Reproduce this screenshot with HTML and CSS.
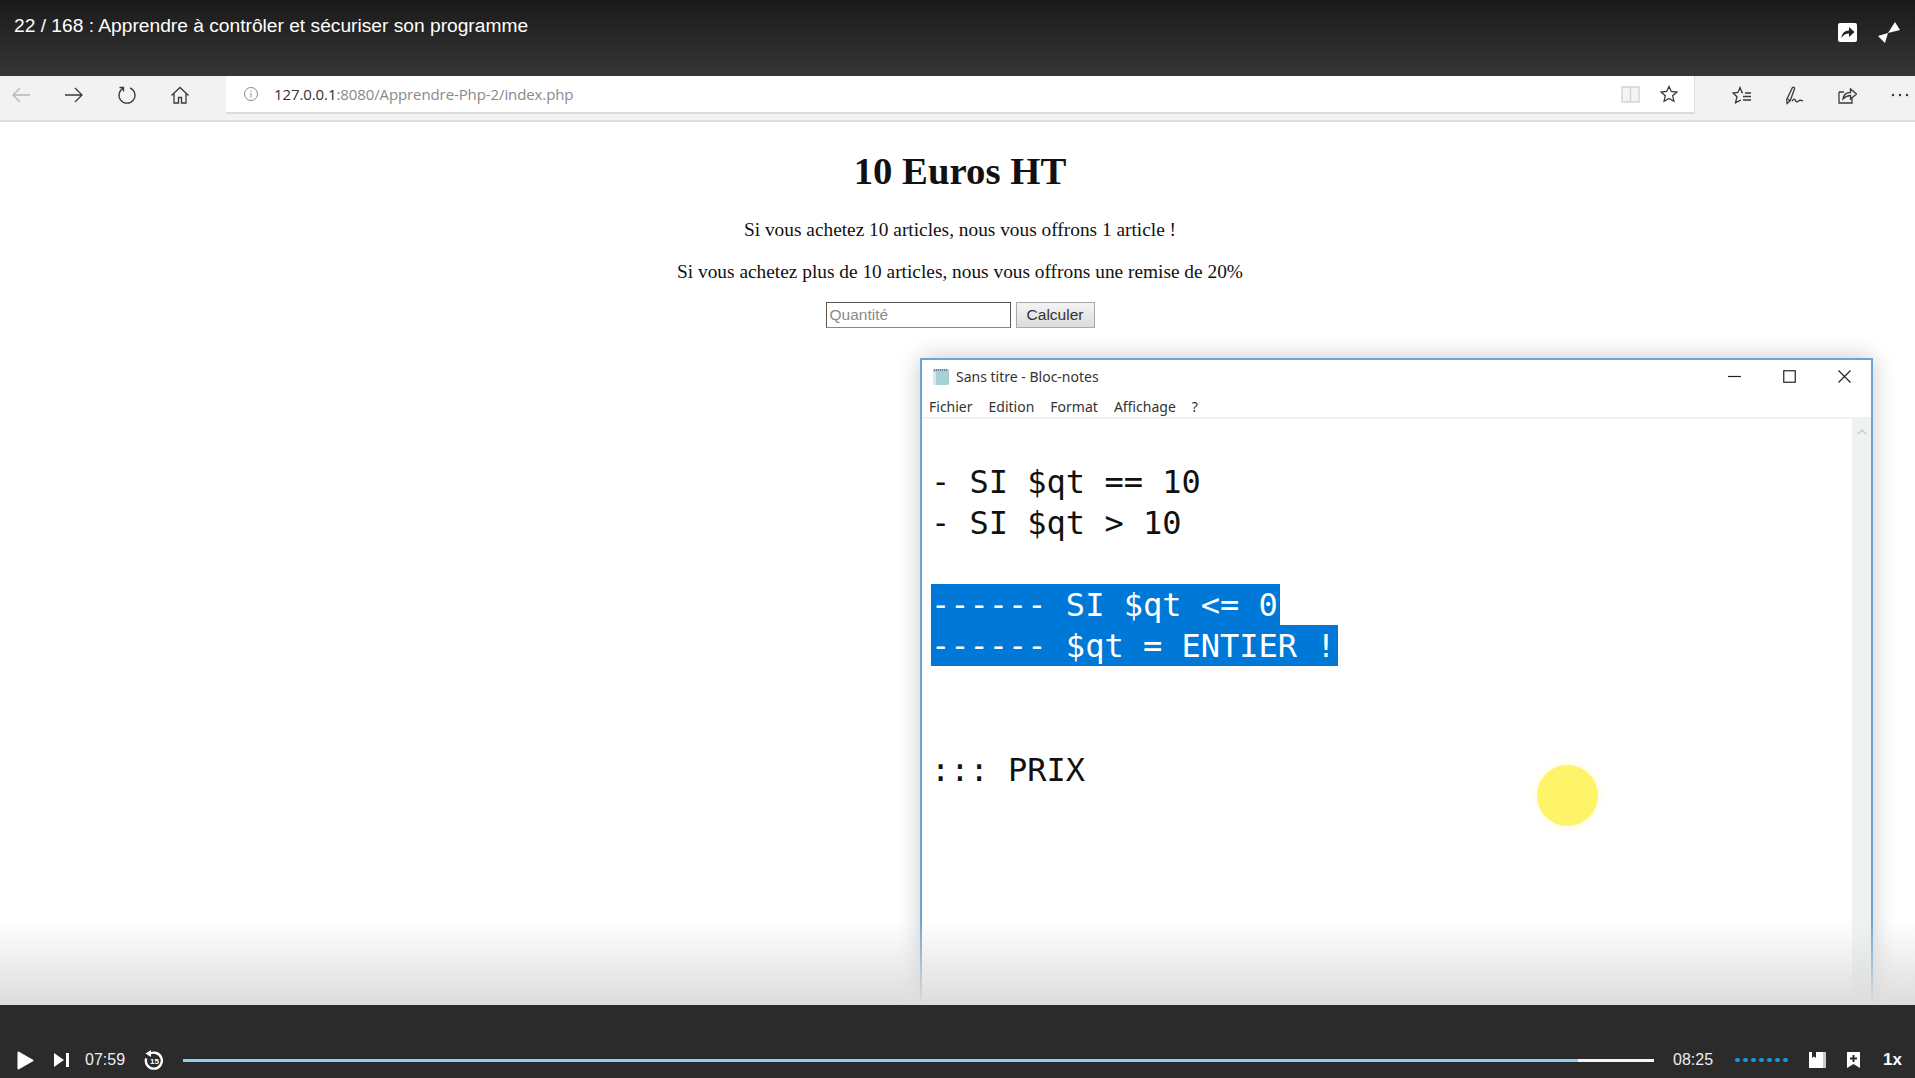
FILE: index.html
```html
<!DOCTYPE html>
<html lang="fr">
<head>
    <meta charset="UTF-8">
    <title>22 / 168 : Apprendre à contrôler et sécuriser son programme</title>
    <link rel="stylesheet" href="styles.css">
</head>
<body>
    <header class="player-top">
        <div class="video-title">22 / 168 : Apprendre à contrôler et sécuriser son programme</div>
        <div class="top-actions">
            <svg class="icon-share-box" viewBox="0 0 19 19"><rect width="19" height="19" rx="2" fill="#fff"/><path d="M3.500 15c.4-4.600 3-7.400 7.500-7.400V4l5.500 5-5.500 5v-3.400c-3.200 0-5.600 1.300-7.500 4.400z" fill="#222"/></svg>
            <svg class="icon-pin" viewBox="0 0 22 22"><path d="M10 11L17 0l5 8zM0 14l10-3-3 10z" fill="#fff"/></svg>
        </div>
    </header>

    <nav class="browser-bar">
        <div class="nav-buttons">
            <svg class="tool-icon" viewBox="0 0 20 20"><path d="M19 10H2M9 3l-7 7 7 7" class="stroke-light"/></svg>
            <svg class="tool-icon" viewBox="0 0 20 20"><path d="M1 10h17M11 3l7 7-7 7" class="stroke"/></svg>
            <svg class="tool-icon" viewBox="0 0 20 20"><path d="M7 2.800a8 8 0 1 0 6 0M6.500 6.500V2.500H2.500" class="stroke"/></svg>
            <svg class="tool-icon" viewBox="0 0 20 20"><path d="M1.500 10.500L10 2.500l8.500 8M4 8.500V18h4.500v-5.500h3V18H16V8.500" class="stroke"/></svg>
        </div>
        <div class="address-bar">
            <svg class="info-icon" viewBox="0 0 16 16"><circle cx="8" cy="8" r="6.500" fill="none" stroke="#888"/><path d="M8 7v4.500M8 4.500v1.300" stroke="#888" fill="none"/></svg>
            <div class="url"><span class="url-host">127.0.0.1</span>:8080/Apprendre-Php-2/index.php</div>
            <svg class="reader-icon" viewBox="0 0 19 18"><path d="M1 2h7.500l1 1 1-1H18v15h-7.500l-1-1-1 1H1zM9.500 3v13" fill="#f4f4f4" stroke="#d2d2d2" stroke-width="1.400"/></svg>
            <svg class="star-icon" viewBox="0 0 18 18"><path d="M9 1.500l2.300 5 5.500.6-4.100 3.700 1.200 5.400L9 13.400 4.100 16.200l1.200-5.400L1.200 7.100l5.500-.6z" class="stroke"/></svg>
        </div>
        <div class="browser-tools">
            <svg class="tool-icon-sm" viewBox="0 0 19 19"><path d="M11 6.500h-1L8 1.500 6 6.500 1 7l4 3.700-1.500 6L9 14M13 7h6M11 10.500h8M11 14h8" class="stroke"/></svg>
            <svg class="tool-icon-sm" viewBox="0 0 19 19"><path d="M7.500 1.500c1.500-.8 2.500.2 2 1.500L5 15l-3 2.500-.3-4zM3 13l2 2M7 15c2-3 3-2 3.500-.5s1.500 2 3 .5 2-1 4.500 0" class="stroke"/></svg>
            <svg class="tool-icon-sm" viewBox="0 0 19 19"><path d="M1 6h5M1 6v11h13v-6M5 13c.5-4 3-6.500 7.500-6.500V3l6 5-6 5V9.500C9 9.500 7 11 5 13z" class="stroke"/></svg>
            <svg class="tool-icon-sm more-icon" viewBox="0 0 18 4"><circle cx="2" cy="2" r="1.200"/><circle cx="9" cy="2" r="1.200"/><circle cx="16" cy="2" r="1.200"/></svg>
        </div>
    </nav>

    <main class="page">
        <section class="php-page">
            <h1>10 Euros HT</h1>
            <p>Si vous achetez 10 articles, nous vous offrons 1 article !</p>
            <p>Si vous achetez plus de 10 articles, nous vous offrons une remise de 20%</p>
            <form class="qty-form">
                <input type="text" placeholder="Quantité">
                <button type="button">Calculer</button>
            </form>
        </section>

        <div class="notepad">
            <div class="np-title">
                <svg class="np-icon" viewBox="0 0 18 18"><path d="M2 2h14l1 1v14l-1 1H3l-2-1V3z" fill="#a9cfd8"/><path d="M2 3h14" stroke="#5d7f8c" stroke-width="2" stroke-dasharray="1 1"/><path d="M1 5h3v13H3l-2-1z" fill="#d9e8ea"/></svg>
                <span class="np-name">Sans titre - Bloc-notes</span>
                <div class="np-controls">
                    <svg viewBox="0 0 13 13"><path d="M0 6.500h13" class="stroke-win"/></svg>
                    <svg viewBox="0 0 13 13"><rect x=".75" y=".75" width="11.500" height="11.500" class="stroke-win"/></svg>
                    <svg viewBox="0 0 13 13"><path d="M.5.500l12 12M12.500.500l-12 12" class="stroke-win"/></svg>
                </div>
            </div>
            <div class="np-menu">
                <span>Fichier</span><span>Edition</span><span>Format</span><span>Affichage</span><span>?</span>
            </div>
            <div class="np-body">
                <div class="np-text">
                    <div class="line-first">&nbsp;</div>
                    <div>- SI $qt == 10</div>
                    <div>- SI $qt &gt; 10</div>
                    <div class="line-gap">&nbsp;</div>
                    <div class="selected">------ SI $qt &lt;= 0</div>
                    <div class="selected">------ $qt = ENTIER !</div>
                    <div>&nbsp;</div>
                    <div>&nbsp;</div>
                    <div class="line-last">::: PRIX</div>
                </div>
                <div class="np-scroll">
                    <svg viewBox="0 0 10 6"><path d="M1 5l4-4 4 4" fill="none" stroke="#c4c9c9" stroke-width="1.500"/></svg>
                </div>
            </div>
        </div>

        <div class="cursor-dot"></div>
        <div class="bottom-fade"></div>
    </main>

    <footer class="player-bottom">
        <svg class="ctl-play" viewBox="0 0 17 19"><path d="M1.500 1.500L15.500 9.500 1.500 17.500z" fill="#fff" stroke="#fff" stroke-width="2" stroke-linejoin="round"/></svg>
        <svg class="ctl-next" viewBox="0 0 15 14"><path d="M0 0l10 7-10 7zM12 0h3v14h-3z" fill="#fff"/></svg>
        <span class="time time-now">07:59</span>
        <svg class="ctl-replay" viewBox="0 0 20 20">
            <path d="M5 4.300a8 8 0 1 1-2.800 4" fill="none" stroke="#fff" stroke-width="2.400"/>
            <path d="M7 0v7L1.500 3.500z" fill="#fff"/>
            <text x="10.500" y="13.500" class="replay-num">15</text>
        </svg>
        <div class="track"><div class="track-played" style="width: 94.8%"></div></div>
        <span class="time time-total">08:25</span>
        <div class="speed-dots"><i></i><i></i><i></i><i></i><i></i><i></i><i></i></div>
        <svg class="ctl-book" viewBox="0 0 17 16"><path d="M0 0h14v16H0z" fill="#fff"/><path d="M14 0h3v16h-3z" fill="#c9c9c9"/><path d="M3 0h4v6L5 4.500 3 6z" fill="#2b2b2b"/></svg>
        <svg class="ctl-mark" viewBox="0 0 13 16"><path d="M0 0h13v16L6.500 12 0 16z" fill="#fff"/><path d="M6.500 3v7M3 6.500h7" stroke="#2b2b2b" stroke-width="2"/></svg>
        <span class="rate">1x</span>
    </footer>
</body>
</html>
```

FILE: styles.css
```css
* {
    box-sizing: border-box;
}
html, body {
    margin: 0;
    height: 100%;
}
body {
    display: flex;
    flex-direction: column;
    height: 1078px;
    overflow: hidden;
    background: #fff;
    font-family: "Liberation Sans", Arial, sans-serif;
}

/* player header */
.player-top {
    height: 76px;
    flex: none;
    display: flex;
    justify-content: space-between;
    padding: 15px 15px 0 14px;
    background: linear-gradient(to bottom, #1a1a1a, #363636);
    color: #fff;
}
.video-title {
    font-size: 19.200px;
    line-height: 22px;
}
.top-actions {
    display: flex;
    align-items: flex-start;
    gap: 21px;
    padding-top: 7px;
}
.icon-share-box {
    width: 19px;
    height: 19px;
    margin-top: 1px;
}
.icon-pin {
    width: 22px;
    height: 22px;
}

/* browser toolbar */
.browser-bar {
    height: 46px;
    flex: none;
    display: flex;
    align-items: flex-start;
    background: #f2f2f2;
    border-bottom: 2px solid #dedede;
}
.stroke, .stroke-light {
    fill: none;
    stroke: #3a3a3a;
    stroke-width: 1.300;
}
.stroke-light {
    stroke: #b5b5b5;
}
.nav-buttons {
    width: 226px;
    height: 38px;
    flex: none;
    display: flex;
    align-items: center;
    gap: 33px;
    padding-left: 11px;
}
.tool-icon {
    width: 20px;
    height: 20px;
}
.address-bar {
    width: 1469px;
    height: 38px;
    flex: none;
    display: flex;
    align-items: center;
    padding: 0 16px 0 17px;
    background: #fff;
    border-right: 1px solid #dcdcdc;
    border-bottom: 2px solid #dcdcdc;
}
.info-icon {
    width: 16px;
    height: 16px;
    flex: none;
}
.url {
    flex: 1;
    margin-left: 15px;
    font-family: "Open Sans", sans-serif;
    font-size: 15px;
    letter-spacing: -0.1px;
    color: #8a8a8a;
}
.url-host {
    color: #333;
}
.reader-icon {
    width: 19px;
    height: 18px;
}
.star-icon {
    width: 18px;
    height: 18px;
    margin-left: 20px;
}
.browser-tools {
    flex: 1;
    height: 38px;
    display: flex;
    align-items: center;
    gap: 34px;
    padding-left: 37px;
}
.tool-icon-sm {
    width: 19px;
    height: 19px;
    flex: none;
}
.more-icon {
    width: 18px;
    height: 4px;
    fill: #333;
}

/* page in the browser */
.page {
    position: relative;
    flex: 1;
    overflow: hidden;
    background: #fff;
}
.php-page {
    padding: 27px 0 0 5px;
    text-align: center;
    font-family: "Liberation Serif", "Times New Roman", serif;
    color: #111;
}
.php-page h1 {
    margin: 0;
    font-size: 38.800px;
    line-height: 43px;
}
.php-page p {
    margin: 0;
    padding-top: 20px;
    font-size: 19.350px;
    line-height: 22px;
}
.php-page h1 + p {
    padding-top: 27px;
}
.qty-form {
    display: flex;
    justify-content: center;
    gap: 5px;
    margin-top: 19px;
}
.qty-form input {
    width: 185px;
    height: 26px;
    padding: 0 3px;
    border: 1px solid #555;
    border-bottom-color: #888;
    border-radius: 0;
    background: #fff;
    font-family: "Liberation Sans", Arial, sans-serif;
    font-size: 15.500px;
}
.qty-form input::placeholder {
    color: #8a8a8a;
}
.qty-form button {
    width: 79px;
    height: 26px;
    padding: 0;
    border: 1px solid #aaa;
    border-radius: 0;
    background: linear-gradient(to bottom, #f4f4f4, #dcdcdc);
    color: #333;
    font-family: "Liberation Sans", Arial, sans-serif;
    font-size: 15.500px;
}

/* notepad window, floating over the page */
.notepad {
    position: absolute;
    left: 920px;
    top: 236px;
    width: 953px;
    height: 700px;
    display: flex;
    flex-direction: column;
    background: #fff;
    border: 2px solid #6ea4cf;
    border-bottom: none;
    box-shadow: 0 0 22px rgba(0, 0, 0, 0.22);
}
.np-title {
    height: 36px;
    flex: none;
    display: flex;
    align-items: center;
    padding: 0 20px 4px 10px;
}
.np-icon {
    width: 18px;
    height: 18px;
}
.np-name {
    flex: 1;
    margin-left: 6px;
    font-family: "Noto Sans", sans-serif;
    font-size: 14px;
    color: #333;
}
.np-controls {
    display: flex;
    gap: 42px;
}
.np-controls svg {
    width: 13px;
    height: 13px;
}
.stroke-win {
    fill: none;
    stroke: #222;
    stroke-width: 1.200;
}
.np-menu {
    height: 23px;
    flex: none;
    display: flex;
    gap: 16px;
    padding-left: 7px;
    font-family: "Noto Sans", sans-serif;
    font-size: 14px;
    line-height: 22px;
    color: #333;
    border-bottom: 2px solid #f1f1f1;
}
.np-body {
    flex: 1;
    display: flex;
    min-height: 0;
}
.np-text {
    flex: 1;
    padding: 0 0 0 9px;
    font-family: "DejaVu Sans Mono", monospace;
    font-size: 32px;
    line-height: 41.200px;
    color: #111;
}
.line-first {
    margin-bottom: 2px;
}
.line-gap {
    margin-bottom: -2px;
}
.line-last {
    margin-top: 1px;
}
.selected {
    width: fit-content;
    padding: 2px 2px 0 0;
    line-height: 39.200px;
    background: #0078d7;
    color: #fff;
}
.np-scroll {
    width: 19px;
    flex: none;
    background: #eef3f2;
    text-align: center;
}
.np-scroll svg {
    width: 10px;
    height: 6px;
    margin-top: 10px;
}

.cursor-dot {
    position: absolute;
    left: 1537px;
    top: 643px;
    width: 61px;
    height: 61px;
    border-radius: 50%;
    background: #fff36a;
    box-shadow: 0 0 8px rgba(255, 243, 106, 0.35);
}
.bottom-fade {
    position: absolute;
    left: 0;
    right: 0;
    bottom: 0;
    height: 85px;
    background: linear-gradient(to bottom, rgba(221, 221, 221, 0), #dcdcdc);
}

/* player controls */
.player-bottom {
    height: 73px;
    flex: none;
    display: flex;
    align-items: center;
    padding: 37px 13px 0 17px;
    background: #2b2b2b;
    color: #fff;
}
.ctl-play {
    width: 17px;
    height: 19px;
    flex: none;
}
.ctl-next {
    width: 15px;
    height: 14px;
    flex: none;
    margin-left: 20px;
}
.time {
    flex: none;
    font-size: 16px;
    color: #eee;
}
.time-now {
    margin-left: 16px;
}
.ctl-replay {
    width: 20px;
    height: 20px;
    flex: none;
    margin-left: 19px;
}
.replay-num {
    font-family: "Liberation Sans", Arial, sans-serif;
    font-size: 8px;
    font-weight: 700;
    text-anchor: middle;
    fill: #fff;
}
.track {
    flex: 1;
    height: 3px;
    margin-left: 19px;
    background: #f5f5f5;
}
.track-played {
    height: 100%;
    background: #8dd0ef;
}
.time-total {
    margin-left: 19px;
}
.speed-dots {
    display: flex;
    gap: 3px;
    flex: none;
    margin-left: 22px;
    margin-right: 1px;
}
.speed-dots i {
    display: block;
    width: 5px;
    height: 4px;
    border-radius: 2px;
    background: #0c9be2;
}
.ctl-book {
    width: 17px;
    height: 16px;
    flex: none;
    margin-left: 20px;
}
.ctl-mark {
    width: 13px;
    height: 16px;
    flex: none;
    margin-left: 21px;
}
.rate {
    flex: none;
    margin-left: 23px;
    font-size: 17px;
    font-weight: 700;
}
```
